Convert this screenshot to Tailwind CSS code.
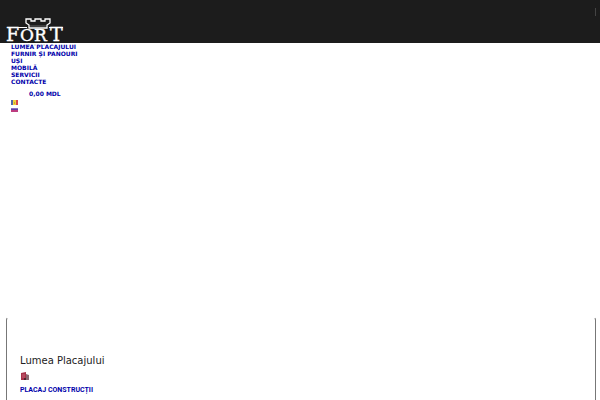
<!DOCTYPE html>
<html lang="ro">
<head>
  <meta charset="UTF-8" />
  <meta name="viewport" content="width=device-width, initial-scale=1" />
  <title>Fort</title>
  <script src="https://cdn.jsdelivr.net/npm/@tailwindcss/browser@4"></script>
</head>
<body class="bg-white overflow-x-hidden font-['DejaVu_Sans',sans-serif]">
  <!-- Header -->
  <header class="bg-[#1c1c1c] h-[43px] flex items-start justify-between pl-[6px] pr-1">
    <a href="#" aria-label="Fort" class="block mt-[17px]">
      <svg class="w-[60px] h-[30px]" viewBox="0 0 60 30" fill="none">
        <path d="M20 2h5v2h4V2h6v2h4V2h5v4l-3 2v3H23V8l-3-2z" stroke="#fff" stroke-width="1.3" />
        <path d="M24 9h16" stroke="#777" stroke-width=".8" />
        <g fill="#fff" stroke="#fff" stroke-width=".4" font-family="DejaVu Serif, serif">
          <text x="0" y="24" font-size="19">F</text>
          <text x="14" y="24" font-size="17">O</text>
          <text x="28" y="24" font-size="17">R</text>
          <text x="44" y="24" font-size="19">T</text>
        </g>
        <path d="M2 10.500h19M43 10.500h14" stroke="#fff" />
        <path d="M19 28h24" stroke="#ccc" stroke-dasharray="2 1" />
      </svg>
    </a>
    <div class="mt-2 h-2 w-px bg-[#444]"></div>
  </header>

  <!-- Navigation -->
  <nav class="pl-[11px] text-[6px] leading-[7px] font-bold text-[#00a]">
    <ul>
      <li><a href="#">LUMEA PLACAJULUI</a></li>
      <li><a href="#">FURNIR ȘI PANOURI</a></li>
      <li><a href="#">UȘI</a></li>
      <li><a href="#">MOBILĂ</a></li>
      <li><a href="#">SERVICII</a></li>
      <li><a href="#">CONTACTE</a></li>
    </ul>
    <a href="#" class="block mt-[5px] ml-[18px]">0,00 MDL</a>
    <ul class="mt-[3px] flex flex-col gap-[3px]">
      <li>
        <a href="#" aria-label="Română" class="block w-[7px]">
          <svg class="w-[7px] h-[5px]" viewBox="0 0 7 5">
            <path fill="#5468a8" d="M0 0h2v5H0z" />
            <path fill="#f0d43c" d="M2 0h3v5H2z" />
            <path fill="#d9474f" d="M5 0h2v5H5z" />
            <path fill="#c9a03c" d="M3 2h1v2H3z" />
          </svg>
        </a>
      </li>
      <li>
        <a href="#" aria-label="Русский" class="block w-[7px]">
          <svg class="w-[7px] h-[4px]" viewBox="0 0 7 4">
            <path fill="#8a6fc0" d="M0 0h7v1H0z" />
            <path fill="#5a3fa5" d="M0 1h7v1H0z" />
            <path fill="#bd3c80" d="M0 2h7v2H0z" />
          </svg>
        </a>
      </li>
    </ul>
  </nav>

  <!-- Category panel -->
  <main class="mt-[205px] ml-[6px] mr-1 border-x border-t border-x-[#777] border-t-transparent rounded-t-[3px] pl-[13px] pt-[36px] pb-4">
    <h2 class="text-[10px] leading-[14px] text-[#222]">Lumea Placajului</h2>
    <svg class="mt-1 ml-px w-[10px] h-[9px]" viewBox="0 0 10 9">
      <path fill="#a8324a" d="M0 1l5-1v8H0z" />
      <path fill="#8a6870" d="M5 2l3 1v5H5z" />
      <path stroke="#d98794" stroke-width=".6" d="M1 3h3M1 5h3" />
      <path fill="#4d2630" d="M3 6h2v2H3z" />
    </svg>
    <a href="#" class="block mt-[5px] text-[7px] leading-[8px] font-bold text-[#00a] font-[Roboto,sans-serif]">PLACAJ CONSTRUCȚII</a>
  </main>
</body>
</html>
